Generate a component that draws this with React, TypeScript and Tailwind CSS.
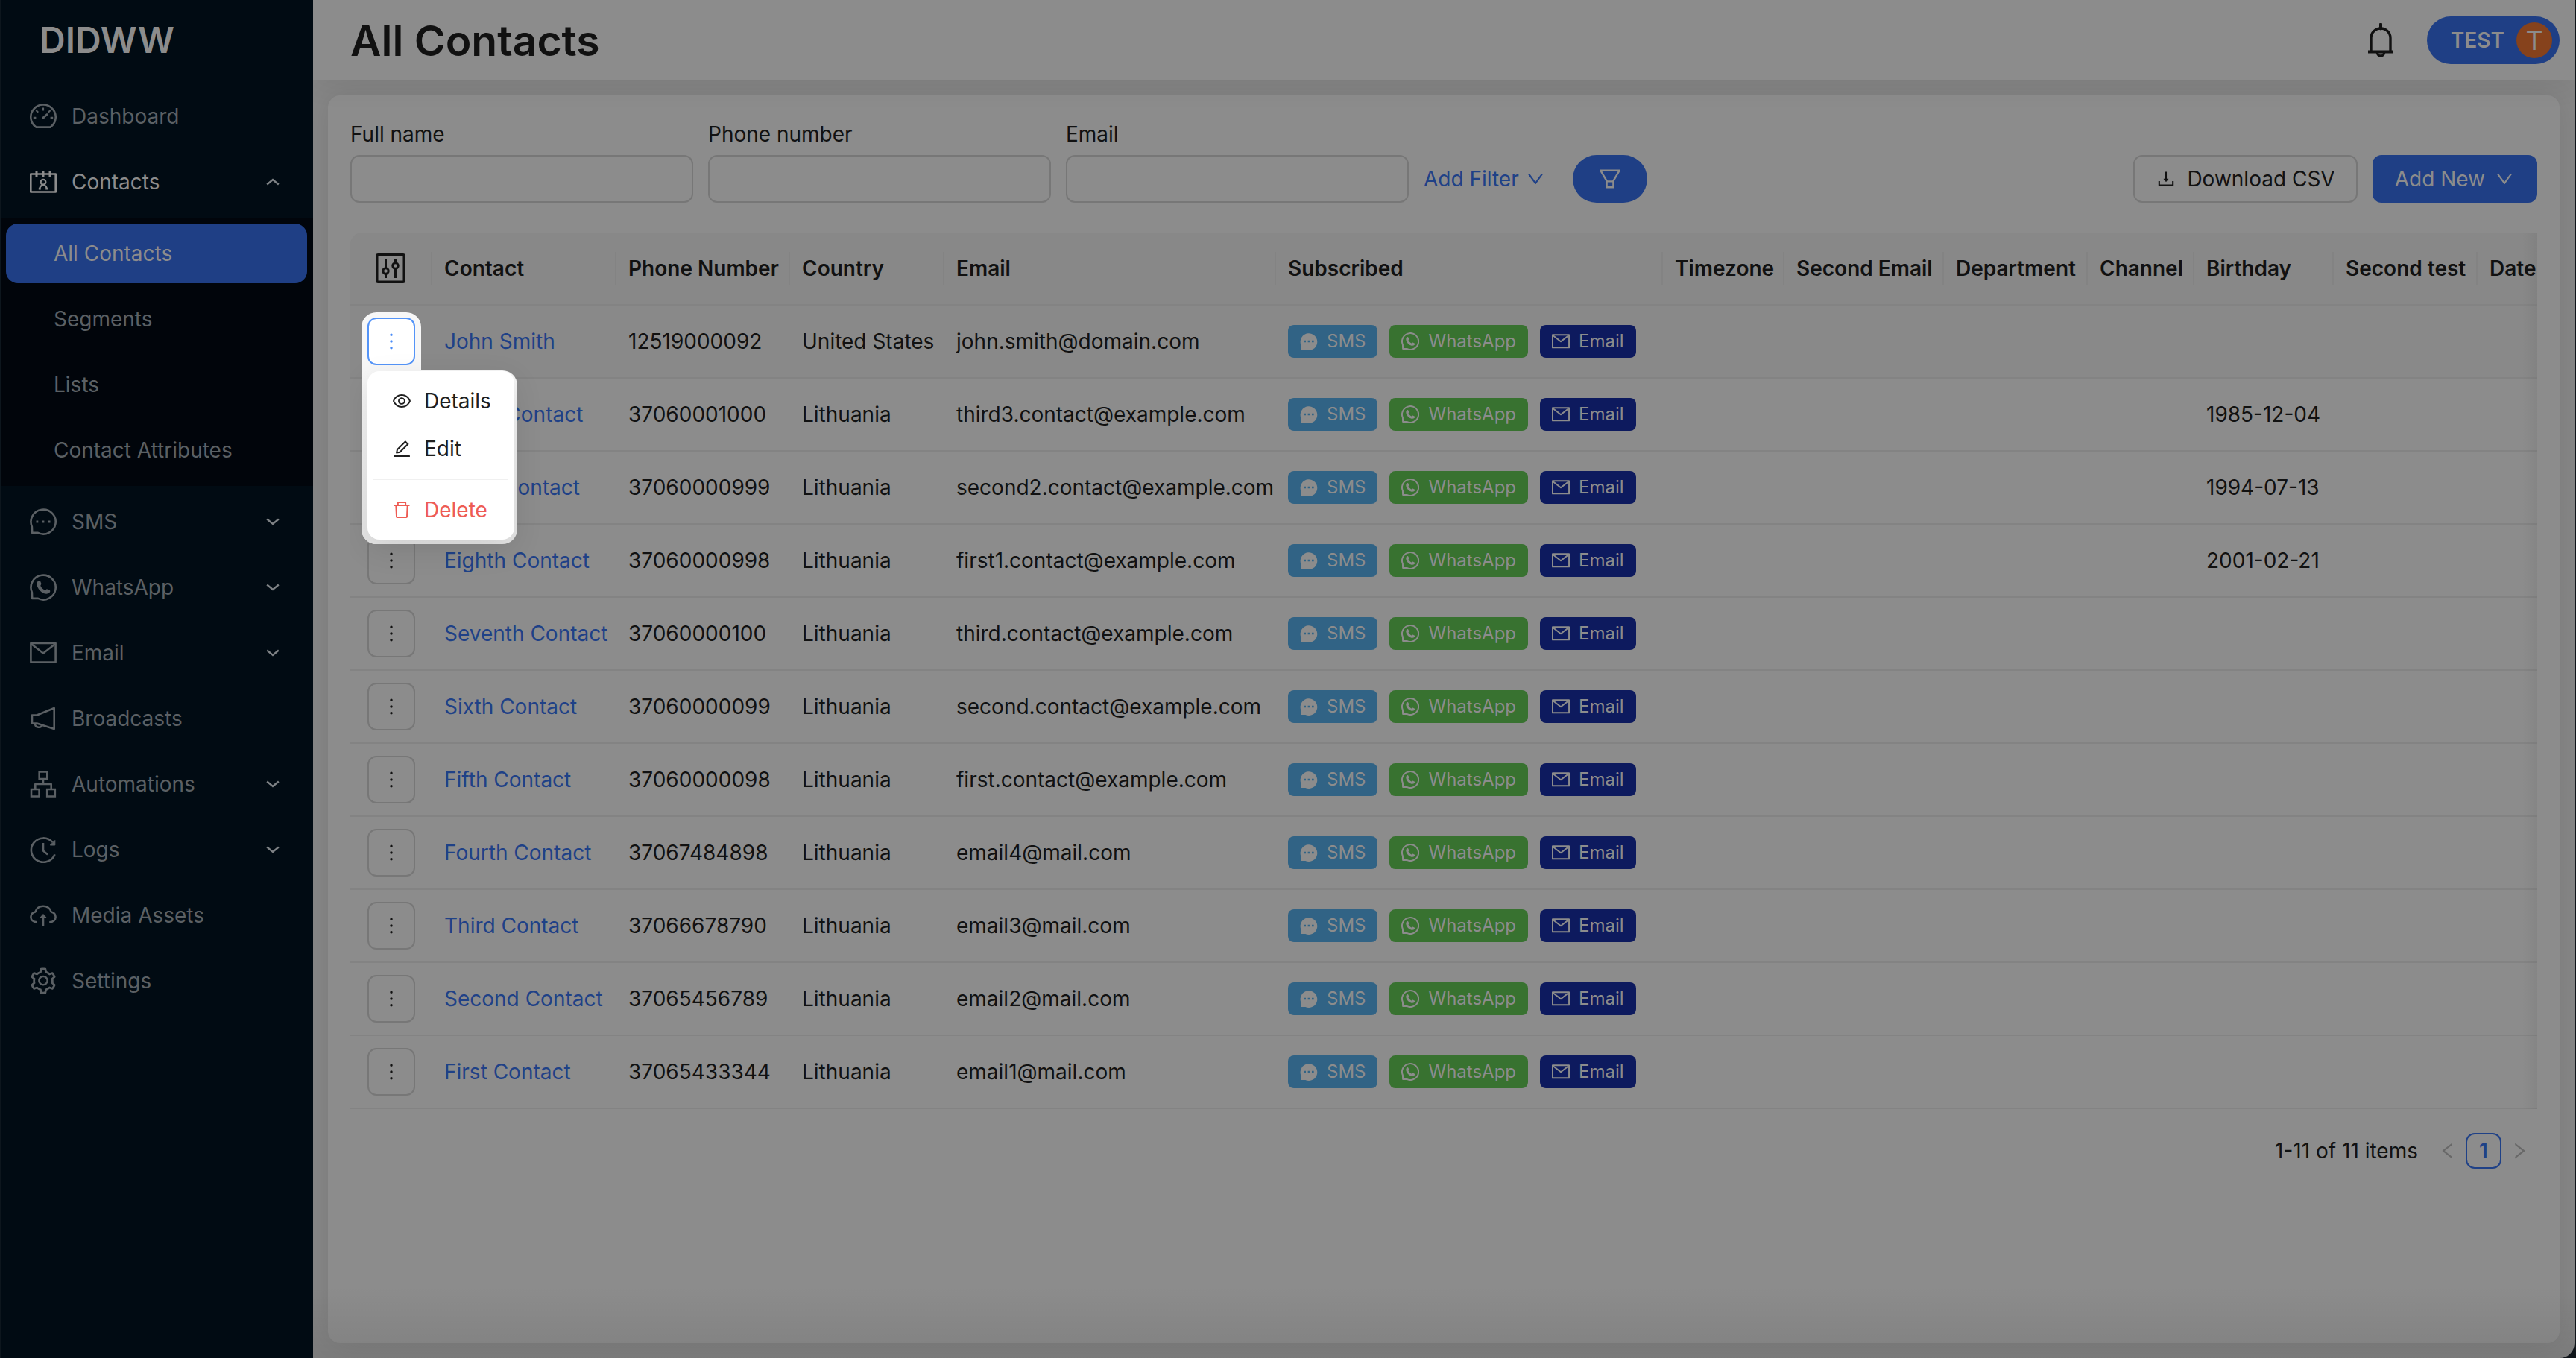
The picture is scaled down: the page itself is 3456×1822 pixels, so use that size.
import type { ReactNode } from "react";
import {
  AiOutlineDelete,
  AiOutlineDown,
  AiOutlineDownload,
  AiOutlineEdit,
  AiOutlineEye,
  AiOutlineFilter,
  AiOutlineLeft,
  AiOutlineMore,
  AiOutlineRight,
  AiOutlineSetting,
} from "react-icons/ai";

type NavEntry = {
  label: string;
  icon: ReactNode;
  arrow?: "up" | "down";
  active?: boolean;
  children?: string[];
};

type Contact = {
  name: string;
  phone: string;
  country: string;
  email: string;
  birthday?: string;
};

const contacts: Contact[] = [
  { name: "John Smith", phone: "12519000092", country: "United States", email: "john.smith@domain.com" },
  { name: "Tenth Contact", phone: "37060001000", country: "Lithuania", email: "third3.contact@example.com", birthday: "1985-12-04" },
  { name: "Ninth Contact", phone: "37060000999", country: "Lithuania", email: "second2.contact@example.com", birthday: "1994-07-13" },
  { name: "Eighth Contact", phone: "37060000998", country: "Lithuania", email: "first1.contact@example.com", birthday: "2001-02-21" },
  { name: "Seventh Contact", phone: "37060000100", country: "Lithuania", email: "third.contact@example.com" },
  { name: "Sixth Contact", phone: "37060000099", country: "Lithuania", email: "second.contact@example.com" },
  { name: "Fifth Contact", phone: "37060000098", country: "Lithuania", email: "first.contact@example.com" },
  { name: "Fourth Contact", phone: "37067484898", country: "Lithuania", email: "email4@mail.com" },
  { name: "Third Contact", phone: "37066678790", country: "Lithuania", email: "email3@mail.com" },
  { name: "Second Contact", phone: "37065456789", country: "Lithuania", email: "email2@mail.com" },
  { name: "First Contact", phone: "37065433344", country: "Lithuania", email: "email1@mail.com" },
];

const columns = [
  { title: "Contact", width: "w-[247px]" },
  { title: "Phone Number", width: "w-[233px]" },
  { title: "Country", width: "w-[207px]" },
  { title: "Email", width: "w-[445px]" },
  { title: "Subscribed", width: "w-[519px]" },
  { title: "Timezone", width: "w-[163px]" },
  { title: "Second Email", width: "w-[214px]" },
  { title: "Department", width: "w-[193px]" },
  { title: "Channel", width: "w-[143px]" },
  { title: "Birthday", width: "w-[187px]" },
  { title: "Second test", width: "w-[193px]" },
  { title: "Date", width: "" },
];

function Glyph({ children, className = "size-9", width = 2.6 }: { children: ReactNode; className?: string; width?: number }) {
  return (
    <svg
      viewBox="0 0 36 36"
      fill="none"
      stroke="currentColor"
      strokeWidth={width}
      strokeLinejoin="round"
      className={`shrink-0 ${className}`}
      aria-hidden="true"
    >
      {children}
    </svg>
  );
}

function DashboardIcon() {
  return (
    <Glyph>
      <path d="M8.5 32.6A16.7 16.5 0 1 1 27.5 32.6Z" />
      <path d="M18 6.5v4M4.8 19.8h3.6M27.6 19.8h3.6M8.4 10l2.8 2.8M27.6 10l-2.8 2.8" strokeWidth="2.2" />
      <path d="M18 20l5-4.4" strokeWidth="2.8" strokeLinecap="round" />
      <circle cx="18" cy="20" r="1.6" fill="currentColor" stroke="none" />
    </Glyph>
  );
}

function ContactsIcon() {
  return (
    <Glyph>
      <path d="M1.3 7.5h33.4v24H1.3Z" />
      <path d="M9 3.5v8M18 3.5v8M27 3.5v8" strokeWidth="3" />
      <circle cx="18" cy="18.2" r="3.4" strokeWidth="2.2" />
      <path d="M12.6 27.6c1.4-3.6 3-5.4 5.4-5.4s4 1.8 5.4 5.4M11.8 27.4h3M21.2 27.4h3" strokeWidth="2.2" />
    </Glyph>
  );
}

function SmsIcon() {
  return (
    <Glyph>
      <path d="M2.9 24.7A16.6 16.4 0 1 1 11 32.9H3.2Z" />
      <path d="M8.5 18h2.8M16.6 18h2.8M24.7 18h2.8" strokeWidth="2.8" />
    </Glyph>
  );
}

function SmsSolidIcon() {
  return (
    <svg viewBox="0 0 36 36" className="size-6 shrink-0" aria-hidden="true">
      <path d="M2 25A17 17 0 1 1 11 34.5H2.5Z" fill="currentColor" />
      <path d="M8 18h4M16 18h4M24 18h4" stroke="#316385" strokeWidth="4" />
    </svg>
  );
}

function WhatsAppIcon({ className, width }: { className?: string; width?: number }) {
  return (
    <Glyph className={className} width={width}>
      <path d="M2.9 24.7A16.6 16.4 0 1 1 11 32.9H3.2Z" />
      <path
        d="M11 9.6c1.6-1 2.8-.6 3.4.8l1 2.6c.3 1.2-1.2 2-1 2.9 1.2 2.7 3.3 4.7 6 5.9 1 .3 1.7-1.7 2.9-1.4l3 1.2c1.5.8 1.2 2.4.2 3.5-3 3-7.7 1.8-11.7-1.6-4.3-3.7-7.3-10.4-3.8-13.9Z"
        fill="currentColor"
        stroke="none"
      />
    </Glyph>
  );
}

function MailIcon({ className, width }: { className?: string; width?: number }) {
  return (
    <Glyph className={className} width={width}>
      <path d="M1.4 5h33.2v25.5H1.4Z" />
      <path d="M2 6l16 12.5L34 6" />
    </Glyph>
  );
}

function BroadcastIcon() {
  return (
    <Glyph>
      <path d="M3 13.5h6.5L32.7 4v28L9.5 24.5H3Z" />
      <path d="M7 25c0 6 8.5 6 9.5 2" />
    </Glyph>
  );
}

function AutomationIcon() {
  return (
    <Glyph>
      <path d="M12.7 1.5h10.6v9.5H12.7ZM2 25h10.6v9.5H2ZM23.2 25h10.6v9.5H23.2Z" strokeLinejoin="miter" />
      <path d="M18 11v7M7.3 25v-7h21.4v7" />
    </Glyph>
  );
}

function LogsIcon() {
  return (
    <Glyph>
      <path d="M33.5 24.2A16.3 16.2 0 1 1 30.5 8" />
      <path d="M33.8 5.5v6.5h-6.5Z" fill="currentColor" strokeWidth="1" />
      <path d="M18 9v10.5l6 5" />
    </Glyph>
  );
}

function CloudIcon() {
  return (
    <Glyph>
      <path d="M9.8 27.2C4.5 27.2 1.4 24.2 1.4 20.2c0-3.6 2.5-6 6-6.8C9 8.3 13 5.8 18 5.8s9 2.5 10.6 7.6c3.5.8 6 3.2 6 6.8 0 4-3.1 7-8.4 7" />
      <path d="M18 32V19" />
      <path d="M13.5 21.5L18 16.5l4.5 5Z" fill="currentColor" strokeWidth="1" />
    </Glyph>
  );
}

function Chevron({ up = false }: { up?: boolean }) {
  return (
    <svg viewBox="0 0 18 10" fill="none" stroke="currentColor" strokeWidth="2.4" className="w-[18px] shrink-0" aria-hidden="true">
      <path d={up ? "M1.2 8.5L9 2l7.8 6.5" : "M1.2 1.5L9 8l7.8-6.5"} />
    </svg>
  );
}

const nav: NavEntry[] = [
  { label: "Dashboard", icon: <DashboardIcon /> },
  {
    label: "Contacts",
    icon: <ContactsIcon />,
    arrow: "up",
    active: true,
    children: ["All Contacts", "Segments", "Lists", "Contact Attributes"],
  },
  { label: "SMS", icon: <SmsIcon />, arrow: "down" },
  { label: "WhatsApp", icon: <WhatsAppIcon />, arrow: "down" },
  { label: "Email", icon: <MailIcon />, arrow: "down" },
  { label: "Broadcasts", icon: <BroadcastIcon /> },
  { label: "Automations", icon: <AutomationIcon />, arrow: "down" },
  { label: "Logs", icon: <LogsIcon />, arrow: "down" },
  { label: "Media Assets", icon: <CloudIcon /> },
  { label: "Settings", icon: <AiOutlineSetting className="-mx-0.5 size-10 shrink-0" /> },
];

function Sidebar() {
  return (
    <aside className="w-[420px] shrink-0 border-l border-[#0d161d] bg-[#010b13] text-[#5b6064]">
      <div className="flex h-[108px] items-center pl-[52px] text-[48px] leading-none font-semibold text-[#8c8c8c]">DIDWW</div>
      <nav className="flex flex-col gap-2 pt-2">
        {nav.map((entry) => (
          <div key={entry.label}>
            <button
              className={`flex h-20 w-full items-center gap-5 pr-[45px] pl-[39px] text-left ${entry.active ? "text-[#8c8c8c]" : ""}`}
            >
              {entry.icon}
              <span className="flex-1">{entry.label}</span>
              {entry.arrow && (
                <span className="text-[#7e8285]">
                  <Chevron up={entry.arrow === "up"} />
                </span>
              )}
            </button>
            {entry.children && (
              <ul className="mt-2 flex flex-col gap-2 bg-[#01050b] py-2 pr-2 pl-[7px]">
                {entry.children.map((child, i) => (
                  <li key={child}>
                    <a
                      href="#"
                      className={`flex h-20 items-center rounded-2xl pl-16 ${i === 0 ? "bg-[#1f3f85] text-[#8c8c8c]" : ""}`}
                    >
                      {child}
                    </a>
                  </li>
                ))}
              </ul>
            )}
          </div>
        ))}
      </nav>
    </aside>
  );
}

function Header() {
  return (
    <header className="relative z-10 flex h-[108px] items-center justify-between bg-[#8c8c8c] pr-5 pl-[50px] shadow-[0_4px_40px_rgba(0,0,0,0.07)]">
      <h1 className="text-[57px] leading-none font-semibold">All Contacts</h1>
      <div className="flex items-center gap-11">
        <button aria-label="Notifications">
          <svg viewBox="0 0 36 46" fill="none" stroke="currentColor" strokeWidth="3.4" className="h-[46px] w-9">
            <path d="M5 37.5V20a13 13 0 0 1 26 0v17.5" />
            <path d="M1 38.5h34" strokeWidth="3.8" />
            <path d="M18 1.5v6" strokeWidth="4" strokeLinecap="round" />
            <path d="M13.5 40a4.5 4 0 0 0 9 0" />
          </svg>
        </button>
        <button className="flex h-16 items-center gap-4 rounded-full bg-[#1f3f85] pr-2.5 pl-8 font-semibold text-[#8c8c8c]">
          TEST
          <span className="flex size-12 items-center justify-center rounded-full bg-[#86421c] text-[36px] leading-none font-normal">T</span>
        </button>
      </div>
    </header>
  );
}

function Filters() {
  return (
    <div className="flex items-end">
      <div className="flex gap-5">
        {["Full name", "Phone number", "Email"].map((label) => (
          <label key={label} className="flex w-[460px] flex-col gap-1.5">
            <span>{label}</span>
            <input type="text" className="h-16 rounded-xl border-2 border-[#777777] bg-transparent px-5 outline-none" />
          </label>
        ))}
      </div>
      <button className="ml-5 flex h-16 items-center gap-2 text-[#1f4187]">
        Add Filter
        <AiOutlineDown className="size-7" />
      </button>
      <button aria-label="Apply filters" className="ml-9 flex h-16 w-[100px] items-center justify-center rounded-full bg-[#1f3f85] text-[#8c8c8c]">
        <AiOutlineFilter className="size-9" />
      </button>
      <div className="ml-auto flex gap-5">
        <button className="flex h-16 items-center gap-3.5 rounded-xl border-2 border-[#777777] px-7">
          <AiOutlineDownload className="size-7" />
          Download CSV
        </button>
        <button className="flex h-16 items-center gap-3 rounded-xl bg-[#1f3f85] px-[30px] text-[#8c8c8c]">
          Add New
          <AiOutlineDown className="size-7" />
        </button>
      </div>
    </div>
  );
}

function Channels() {
  return (
    <div className="flex gap-4 text-[24px] leading-none text-[#8c8c8c]">
      <span className="flex h-11 items-center gap-3 rounded-lg bg-[#316385] px-4">
        <SmsSolidIcon />
        SMS
      </span>
      <span className="flex h-11 items-center gap-3 rounded-lg bg-[#387230] px-4">
        <WhatsAppIcon className="size-6" width={3} />
        WhatsApp
      </span>
      <span className="flex h-11 items-center gap-3 rounded-lg bg-[#0d1a5e] px-4">
        <MailIcon className="size-6" width={3} />
        Email
      </span>
    </div>
  );
}

function RowMenu() {
  return (
    <div className="relative z-20 size-16">
      <div className="absolute -top-[7px] -left-2 h-[311px] w-20 rounded-[20px] bg-[#f7f7f7]" />
      <div className="absolute top-[71px] -left-2 h-[233px] w-[209px] rounded-[20px] rounded-tl-none bg-linear-to-b from-[#f7f7f7] to-[#e6e6e6]" />
      <button aria-label="Actions" className="relative flex size-16 items-center justify-center rounded-xl border-2 border-[#5494f8] bg-white text-[#4a8cf7]">
        <AiOutlineMore className="size-8" />
      </button>
      <div className="absolute top-[72px] left-0 w-[197px] rounded-2xl bg-white p-2 text-[#1f1f1f] shadow-[0_12px_40px_rgba(0,0,0,0.1)]">
        <button className="flex h-16 w-full items-center gap-4 pl-6">
          <AiOutlineEye className="size-7" />
          Details
        </button>
        <button className="flex h-16 w-full items-center gap-4 pl-6">
          <AiOutlineEdit className="size-7" />
          Edit
        </button>
        <hr className="my-2 border-t-2 border-[#f0f0f0]" />
        <button className="flex h-16 w-full items-center gap-4 pl-6 text-[#ee5c54]">
          <AiOutlineDelete className="size-7" />
          Delete
        </button>
      </div>
    </div>
  );
}

function ContactsTable() {
  return (
    <div className="relative mt-10 overflow-hidden rounded-tl-2xl">
      <table className="w-full table-fixed border-separate border-spacing-0 whitespace-nowrap">
        <thead>
          <tr className="h-[98px] bg-[#888888] text-left">
            <th className="w-[110px] border-b-2 border-[#838383] p-0">
              <div className="flex h-11 items-center justify-center border-r-2 border-[#838383]">
                <button aria-label="Columns">
                  <svg viewBox="0 0 40 40" fill="none" stroke="currentColor" strokeWidth="3" className="size-10">
                    <rect x="1.8" y="1.8" width="36.4" height="36.4" rx="1.5" strokeWidth="3.4" />
                    <path d="M13.5 7.5v12M13.5 27v6M26.5 7.5v5M26.5 20v13" />
                    <circle cx="13.5" cy="23.5" r="3.7" />
                    <circle cx="26.5" cy="16.5" r="3.7" />
                  </svg>
                </button>
              </div>
            </th>
            {columns.map((col) => (
              <th key={col.title} className={`border-b-2 border-[#838383] p-0 font-semibold ${col.width}`}>
                <div className={`h-11 pl-4 ${col.width ? "border-r-2 border-[#838383]" : ""}`}>{col.title}</div>
              </th>
            ))}
          </tr>
        </thead>
        <tbody className="[&_td]:border-b-2 [&_td]:border-[#838383] [&_td]:py-0 [&_td]:pr-0 [&_td]:pl-4">
          {contacts.map((contact, i) => (
            <tr key={contact.phone} className={`h-[98px] ${i === 0 ? "bg-[#898989]" : ""}`}>
              <td>
                <div className="flex justify-center pr-4">
                  {i === 0 ? (
                    <RowMenu />
                  ) : (
                    <button aria-label="Actions" className="flex size-16 items-center justify-center rounded-xl border-2 border-[#777777]">
                      <AiOutlineMore className="size-8" />
                    </button>
                  )}
                </div>
              </td>
              <td>
                <a href="#" className="text-[#1f4187]">
                  {contact.name}
                </a>
              </td>
              <td>{contact.phone}</td>
              <td>{contact.country}</td>
              <td>{contact.email}</td>
              <td>
                <Channels />
              </td>
              <td />
              <td />
              <td />
              <td />
              <td>{contact.birthday}</td>
              <td />
              <td />
            </tr>
          ))}
        </tbody>
      </table>
      {/* scroll hint on the right edge */}
      <div className="pointer-events-none absolute inset-y-0 right-0 w-5 bg-linear-to-l from-black/5 to-transparent" />
    </div>
  );
}

function Pagination() {
  return (
    <div className="mt-8 flex h-12 items-center justify-end">
      <span className="mr-4">1-11 of 11 items</span>
      <button aria-label="Previous page" className="flex size-12 items-center justify-center text-[#686868]">
        <AiOutlineLeft className="size-7" />
      </button>
      <button className="size-12 rounded-xl border-2 border-[#1f4187] leading-none font-semibold text-[#1f4187]">1</button>
      <button aria-label="Next page" className="flex size-12 items-center justify-center text-[#686868]">
        <AiOutlineRight className="size-7" />
      </button>
    </div>
  );
}

export default function App() {
  return (
    <div className="flex min-h-screen bg-[#10151a] pr-0.5 font-['Inter',sans-serif] text-[28px] leading-[44px] text-[#111111]">
      <Sidebar />
      <div className="relative flex min-w-0 flex-1 flex-col overflow-hidden rounded-br-[20px] bg-[#878787]">
        <Header />
        <main className="flex flex-1 flex-col p-5">
          <section className="flex-1 rounded-2xl bg-[#8c8c8c] px-[30px] pt-[30px] shadow-[0_0_40px_rgba(0,0,0,0.1)]">
            <Filters />
            <ContactsTable />
            <Pagination />
          </section>
        </main>
        <div className="pointer-events-none absolute inset-x-0 bottom-0 h-24 bg-linear-to-t from-black/8 to-transparent" />
      </div>
    </div>
  );
}
